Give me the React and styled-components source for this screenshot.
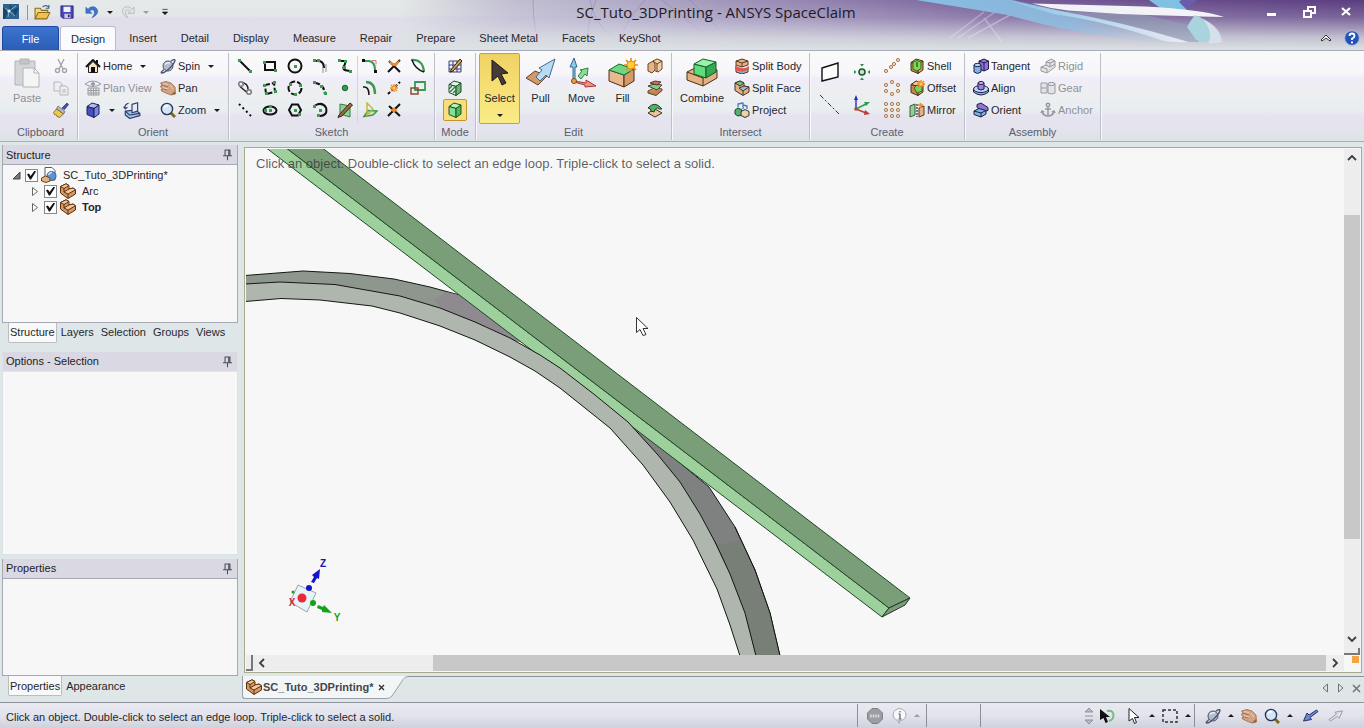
import { useState } from "react";
import styled, { createGlobalStyle, css } from "styled-components";

const GlobalStyle = createGlobalStyle`
  * {
    box-sizing: border-box;
  }
  body {
    margin: 0;
    background: #e0e6ea;
    color: #26262c;
    font-family: "Liberation Sans", Arial, sans-serif;
    font-size: 11px;
    line-height: 16px;
  }
  button {
    margin: 0;
    padding: 0;
    border: 0;
    background: none;
    color: inherit;
    font: inherit;
  }
  svg {
    display: block;
    flex: none;
  }
`;

const ink = "#1b1b1b";
const tan = "#e3b184";
const green = "#3a9a52";

const Window = styled.div`
  display: flex;
  flex-direction: column;
  min-height: 100vh;
`;

/* ---------- title bar ---------- */

const Header = styled.header`
  position: relative;
  overflow: hidden;
  border-bottom: 1px solid #a9abba;
  background: linear-gradient(#e6e8e8 0, #e4e8e9 15px, #e0dfe9 18px, #e1deea 100%);
`;

const HeaderArt = styled.svg`
  position: absolute;
  top: 0;
  right: 0;
`;

const TitleBar = styled.div`
  position: relative;
  display: grid;
  grid-template-columns: 1fr auto 1fr;
  align-items: center;
  height: 24px;
`;

const Title = styled.h1`
  margin: 0;
  padding-left: 68px;
  font: 400 15px/20px "Open Sans", "Noto Sans", sans-serif;
  color: #1d1a26;
`;

const QuickAccess = styled.div`
  display: flex;
  align-items: center;
  padding-left: 3px;
`;

const QuickSep = styled.span`
  width: 1px;
  height: 15px;
  margin: 0 6px 0 8px;
  background: #8d93a0;
`;

const QuickButton = styled.button`
  display: grid;
  place-items: center;
  width: ${({ $w }) => $w || 25}px;
  height: 20px;
`;

const WindowButtons = styled.div`
  display: flex;
  justify-content: flex-end;
  button {
    display: grid;
    place-items: center;
    width: 37px;
    height: 20px;
  }
`;

const Caret = styled.span`
  width: 0;
  height: 0;
  border: 3px solid transparent;
  border-${({ $up }) => ($up ? "top" : "bottom")}-width: 0;
  border-${({ $up }) => ($up ? "bottom" : "top")}-color: ${({ $dim }) =>
    $dim ? "#9a9ca4" : ink};
`;

const TabRow = styled.nav`
  position: relative;
  display: flex;
  align-items: flex-end;
  height: 26px;
  padding-left: 2px;
`;

const RibbonTab = styled.button`
  height: 24px;
  margin-right: 2px;
  padding: 0 11px;
  ${({ $kind }) =>
    $kind === "file" &&
    css`
      width: 57px;
      margin-right: 1px;
      border: 1px solid #1d4aa4;
      border-bottom: 0;
      border-radius: 3px 3px 0 0;
      background: linear-gradient(#3d74cd, #2a5db8);
      color: #fff;
    `}
  ${({ $kind }) =>
    $kind === "active" &&
    css`
      padding: 0 10px;
      border: 1px solid #b9bccb;
      border-bottom: 0;
      border-radius: 3px 3px 0 0;
      background: #fbfbfd;
    `}
`;

const TabRowEnd = styled.div`
  display: flex;
  align-items: center;
  gap: 12px;
  height: 24px;
  margin-left: auto;
  padding-right: 4px;
`;

/* ---------- ribbon ---------- */

const Ribbon = styled.div`
  display: flex;
  height: 91px;
  padding: 2px 0 0 4px;
  border-bottom: 1px solid #a9aebd;
  background: linear-gradient(
    #fafafa 0,
    #f7f7fa 22px,
    #efedf9 28px,
    #eeeef0 40px,
    #e9eef0 58px,
    #e5e3ef 66px,
    #e4e3ee 78px,
    #dce4e6 100%
  );
`;

const Group = styled.section`
  display: flex;
  flex-direction: column;
  margin-bottom: 1px;
  border-right: 1px solid #bdc0cb;
  box-shadow: 1px 0 #f8f8fb;
`;

const GroupBody = styled.div`
  display: flex;
  height: 71px;
  padding: ${({ $pad }) => $pad || "0 4px"};
`;

const GroupName = styled.h2`
  margin: 0;
  font-size: 11px;
  font-weight: 400;
  text-align: center;
  color: #5b5e6c;
`;

const BigButton = styled.button`
  display: flex;
  flex-direction: column;
  align-items: center;
  width: ${({ $w }) => $w || 41}px;
  padding-top: 3px;
  border: 1px solid transparent;
  border-radius: 2px;
  color: ${({ disabled }) => (disabled ? "#8f9098" : "inherit")};
  ${({ $on }) =>
    $on &&
    css`
      border-color: #c4a23c;
      background: linear-gradient(#f0d264, #f6de74 45%, #f9ec86);
    `}
  svg {
    margin-bottom: 1px;
  }
  ${Caret} {
    margin-top: 8px;
  }
`;

const IconGrid = styled.div`
  display: grid;
  grid-template-columns: repeat(${({ $cols }) => $cols || 1}, ${({ $w }) => $w || 24}px);
  grid-auto-rows: ${({ $h }) => $h || 22}px;
  padding-top: 2px;
`;

const GridDivider = styled.span`
  width: 1px;
  height: 66px;
  margin-top: 3px;
  background: #d3d5dd;
`;

const IconButton = styled.button`
  display: grid;
  place-items: center;
  border: 1px solid transparent;
  border-radius: 2px;
  ${({ $on }) =>
    $on &&
    css`
      border-color: #c4962c;
      background: #f8df7c;
    `}
`;

const LabelColumn = styled.div`
  display: flex;
  flex-direction: column;
  width: ${({ $w }) => $w}px;
  padding-top: 2px;
`;

const LabelRow = styled.div`
  display: flex;
  align-items: center;
  gap: 7px;
  height: 22px;
`;

const LabelButton = styled.button`
  display: flex;
  align-items: center;
  gap: 2px;
  height: 22px;
  white-space: nowrap;
  color: ${({ disabled }) => (disabled ? "#8f9098" : "inherit")};
  ${Caret} {
    margin-left: 6px;
  }
`;

/* ---------- work area ---------- */

const Work = styled.div`
  display: flex;
  flex: 1;
  background: #dfe6e8;
`;

const Sidebar = styled.aside`
  display: flex;
  flex-direction: column;
  width: 240px;
  padding: 3px 2px 0;
`;

const Panel = styled.section`
  display: flex;
  flex-direction: column;
  flex: ${({ $grow }) => $grow} 1 0;
  margin-bottom: ${({ $plain }) => ($plain ? 4 : 0)}px;
  border: 1px solid ${({ $plain }) => ($plain ? "#dde2e8" : "#a4a9b3")};
  border-top: 0;
  background: #f7f7f7;
`;

const PanelHead = styled.header`
  display: flex;
  align-items: center;
  justify-content: space-between;
  height: 20px;
  padding: 0 3px;
  border-bottom: 1px solid ${({ $plain }) => ($plain ? "#e4e4ec" : "#a4a9b3")};
  background: #d9d8e3;
  h2 {
    margin: 0;
    font-size: 11px;
    font-weight: 400;
    color: #1c1c22;
  }
`;

const PanelTabs = styled.div`
  display: flex;
  height: ${({ $h }) => $h}px;
  padding-left: 6px;
`;

const PanelTab = styled.button`
  height: 20px;
  padding: 0 1px;
  border: 1px solid ${({ $on }) => ($on ? "#b9bdc4" : "transparent")};
  border-top: 0;
  border-radius: 0 0 2px 2px;
  background: ${({ $on }) => ($on ? "#f9f9f9" : "none")};
  & + & {
    padding: 0 2px 0 3px;
  }
`;

const Tree = styled.ul`
  margin: 0;
  padding: 2px 0 0 8px;
  list-style: none;
`;

const TreeRow = styled.li`
  display: flex;
  align-items: center;
  height: 16px;
  padding-left: ${({ $level }) => $level * 19}px;
  font-weight: ${({ $bold }) => ($bold ? 700 : 400)};
  label {
    display: flex;
    align-items: center;
    gap: 6px;
    margin-left: 3px;
  }
`;

const Twisty = styled.button`
  display: grid;
  place-items: center;
  width: 10px;
  height: 14px;
  margin-right: 4px;
`;

const Check = styled.input`
  appearance: none;
  display: grid;
  place-items: center;
  width: 13px;
  height: 13px;
  margin: 0;
  border: 1px solid #85888e;
  background: #fff;
  &:checked::before {
    content: "";
    width: 9px;
    height: 9px;
    background: #111;
    clip-path: polygon(0 42%, 22% 32%, 40% 60%, 85% 0, 100% 10%, 45% 100%, 32% 100%);
  }
`;

const Main = styled.main`
  display: flex;
  flex: 1;
  flex-direction: column;
  min-width: 0;
`;

const Frame = styled.div`
  display: grid;
  flex: 1;
  grid-template-columns: 1fr 16px;
  grid-template-rows: 1fr 16px;
  margin: 5px 2px 3px 4px;
  padding: 1px;
  border: 1px solid #a9a98c;
  background: #f7f7f7;
`;

const Viewport = styled.div`
  position: relative;
  min-height: 380px;
  overflow: hidden;
`;

const Scene = styled.svg`
  position: absolute;
  inset: 0;
  width: 100%;
  height: 100%;
`;

const Hint = styled.p`
  position: absolute;
  top: 7px;
  left: 10px;
  margin: 0;
  font-size: 13px;
  color: rgba(50, 50, 56, 0.78);
`;

const ScrollBar = styled.div`
  display: flex;
  flex-direction: ${({ $vertical }) => ($vertical ? "column" : "row")};
  background: #ededed;
`;

const ScrollButton = styled.button`
  display: grid;
  place-items: center;
  flex: none;
  width: 18px;
  height: 16px;
  ${({ $vertical }) => $vertical && "width: 16px; height: 18px;"}
`;

const Track = styled.div`
  flex: ${({ $grow }) => $grow} 1 0;
  background: ${({ $thumb }) => ($thumb ? "#c8c8c8" : "none")};
`;

const SplitBox = styled.span`
  flex: none;
  width: ${({ $vertical }) => ($vertical ? 16 : 7)}px;
  height: ${({ $vertical }) => ($vertical ? 7 : 16)}px;
  border-right: 2px solid #77777c;
  border-bottom: 2px solid #77777c;
`;

const Corner = styled.div`
  display: flex;
  justify-content: flex-end;
  padding: 1px;
  span {
    width: 7px;
    height: 7px;
    background: #f2a541;
  }
`;

const DocStrip = styled.div`
  display: flex;
  align-items: flex-start;
  height: 26px;
  margin-left: 2px;
`;

const DocTab = styled.div`
  display: flex;
  align-items: center;
  gap: 1px;
  height: 23px;
  padding-left: 3px;
  border: 1px solid #9aa0a8;
  border-width: 0 0 1px 1px;
  border-radius: 0 0 0 3px;
  background: #f3f6f7;
  font-size: 11px;
  font-weight: 700;
  color: #45464c;
  button {
    margin-left: 3px;
  }
`;

const DocRest = styled.div`
  display: flex;
  flex: 1;
  align-items: center;
  justify-content: flex-end;
  gap: 8px;
  height: 23px;
  padding-right: 3px;
  border-top: 1px solid #8b9298;
`;

/* ---------- status bar ---------- */

const StatusBar = styled.footer`
  display: flex;
  align-items: center;
  height: 26px;
  padding-left: 6px;
  border-top: 1px solid #8e929c;
  background: linear-gradient(#e9e9f1, #e2e3ec 50%, #cfd1dc);
`;

const StatusText = styled.output`
  flex: 1;
  padding-top: 2px;
`;

const StatusSection = styled.div`
  display: flex;
  align-items: center;
  height: 23px;
  width: ${({ $w }) => ($w ? `${$w}px` : "auto")};
  padding-left: ${({ $pad }) => $pad || 0}px;
  border-left: 1px solid ${({ $clear }) => ($clear ? "transparent" : "#8c909a")};
`;

const StatusButton = styled.button`
  display: grid;
  place-items: center;
  width: ${({ $w }) => $w || 20}px;
  height: 22px;
`;

/* ---------- icons ---------- */

const line = { fill: "none", stroke: "#111", strokeWidth: 1.5 };

const Dots = ({ at, color = green, size = 3 }) =>
  at.map(([x, y]) => (
    <rect key={`${x}-${y}`} x={x - 1} y={y - 1} width={size} height={size} fill={color} />
  ));

const Rings = ({ at }) =>
  at.map(([x, y]) => (
    <circle key={`${x}-${y}`} cx={x} cy={y} r="1.6" fill="#f3d9bd" stroke="#a97c55" />
  ));

const Box = ({ top, left, right, stroke = ink }) => (
  <g stroke={stroke} strokeLinejoin="round">
    <path d="M2 4.500 7 1l7 2-5 3.500z" fill={top} />
    <path d="M2 4.500l7 2v9l-7-3z" fill={left} />
    <path d="M9 6.500l5-3.500v9l-5 3.500z" fill={right} />
  </g>
);

const Sparks = ({ x = 8, y = 5 }) => (
  <g>
    <path
      d={`M${x - 4} ${y}h8M${x} ${y - 4}v8M${x - 3} ${y - 3}l6 6M${x + 3} ${y - 3}l-6 6`}
      stroke="#f08a2c"
      strokeWidth="1.4"
    />
    <circle cx={x} cy={y} r="1.6" fill="#ffd23c" />
  </g>
);

const Hand = () => (
  <g strokeLinejoin="round">
    <path
      d="M.500 3L6 1.500l5 1.500 4 4 .500 7L11 15l-4-1.500L1.500 11 1 9.500 3 9 .500 7 1 5.500 2.500 5.500z"
      fill="#d3a382"
      stroke="#94694b"
      strokeWidth=".8"
    />
    <path d="M3 5.500l5 1.500M3.500 9l4 1" fill="none" stroke="#94694b" strokeWidth=".8" />
    <path d="M3 3.500l5 1M3 7.500l5 1.500M10 5l3 4" fill="none" stroke="#efd0b4" />
    <path d="M11 14.500l4-3.500v3z" fill="#8f6044" />
  </g>
);

const Magnifier = () => (
  <g>
    <path d="M11 11l4 4" stroke="#7d6a1c" strokeWidth="3" />
    <circle cx="7" cy="7" r="5.6" fill="#d5e4f5" stroke="#26365e" strokeWidth="1.4" />
    <path d="M4 6q1-3 4-2" fill="none" stroke="#fff" strokeWidth="1.4" />
  </g>
);

const Planet = () => (
  <g fill="none" stroke="#4a546e">
    <circle cx="8" cy="8" r="5" fill="#b4bccd" />
    <path d="M5 6.500Q7 4 10 5" stroke="#eef1f6" strokeWidth="1.500" />
    <path d="M4 11.500C1 14 .500 15 2 15c3 0 12-8 13-12.500.300-1.500-2-1-4 .800" strokeWidth="1.300" />
  </g>
);

const StepBlock = () => (
  <g stroke="#5d3213" strokeLinejoin="round">
    <path d="M.500 3.500L6 .800 9 2.500V6l4-1 2.500 1.800V11L8 15.500.500 10z" fill="#d9955e" />
    <path d="M.500 3.500L6 .800 9 2.500 4 5.500zM4 9L9 6l4-1 2.500 1.800L8 11z" fill="#f3caa2" />
    <path d="M4 5.500V9M8 11v4.500" fill="none" />
  </g>
);

const icons = {
  logo: (
    <g>
      <rect width="16" height="15" fill="#2b6492" />
      <path d="M0 3l5 4-3 8H0zM7 0l3 6-4 4M16 3l-6 3 2 7" fill="#1c4669" />
      <path d="M2 4l4 3-1 6M6 7l7-5M6 7l6 5" fill="none" stroke="#7fb4d4" />
      <circle cx="6" cy="7" r="1.600" fill="#e6f4fa" />
    </g>
  ),
  open: (
    <g stroke="#8a6a1c" strokeLinejoin="round">
      <path d="M1 14V4h5l1 2h6v3" fill="#f5d778" />
      <path d="M1 14l3-6h11l-3 6z" fill="#f0c14a" />
      <path d="M8 3q3-3 6 0M14 1v3h-3" fill="none" stroke="#3b5b8c" />
    </g>
  ),
  save: (
    <g>
      <path d="M1 1h14v14H3l-2-2z" fill="#4a45b5" stroke="#2b2780" />
      <path d="M4 2h8v6H4z" fill="#eef0fb" />
      <path d="M5 10h7v5H5z" fill="#c9cbe6" />
      <path d="M9 11h2v3H9z" fill="#2b2780" />
    </g>
  ),
  undo: (
    <path
      d="M1 2.500v7h7L5.500 7Q8 4.500 10 6q2.500 3-2 8.500Q15 11 14.500 6.500 13 1.500 8 2 5 2.500 3.500 4.800z"
      fill="#3f74cc"
      stroke="#2a55a0"
      strokeWidth=".6"
    />
  ),
  redo: (
    <path
      d="M15 2.500v7H8L10.500 7Q8 4.500 6 6q-2.500 3 2 8.500Q1 11 1.500 6.500 3 1.500 8 2q3 .500 4.500 2.800z"
      fill="#e1e3e7"
      stroke="#aaadb4"
      strokeWidth=".8"
    />
  ),
  cut: (
    <g fill="none" stroke="#a3a5ab" strokeWidth="1.400">
      <path d="M5 1l5 10M11 1L6 11" />
      <circle cx="4.500" cy="12.500" r="2" />
      <circle cx="11.500" cy="12.500" r="2" />
    </g>
  ),
  copy: (
    <g fill="#eeeef0" stroke="#b4b6bc">
      <path d="M1 2h6l2 2v7H1z" />
      <path d="M7 6h6l2 2v7H7z" />
      <path d="M9 10h4M9 12h4" />
    </g>
  ),
  brush: (
    <g stroke="#6e5a24" strokeWidth=".8">
      <path d="M9 6l5-5 1.500 1.500-4 5z" fill="#4b4fa8" stroke="#34386f" />
      <path d="M5 4l7 5.500-1.500 2.500L3.500 7z" fill="#b5b7c4" stroke="#666a78" />
      <path d="M3.500 7l7 5-4 3.500-2.500-1-.500-1.500-2-.500-1-2z" fill="#edc84c" />
    </g>
  ),
  home: (
    <g strokeLinejoin="round">
      <path d="M1 9l7-7 7 7" fill="none" stroke="#111" strokeWidth="2" />
      <path d="M3.500 8L8 3.500 12.500 8v6.500h-9z" fill="#f4e6c3" stroke="#222" />
      <path d="M6 9h4v5.500H6z" fill="#111" />
      <path d="M12 2v3" stroke="#111" strokeWidth="2" />
    </g>
  ),
  planView: (
    <g fill="none" stroke="#989aa1">
      <path d="M0 4q8-6 16 0-8 5-16 0z" />
      <circle cx="8" cy="4" r="1.500" fill="#989aa1" />
      <path d="M3 8h11v7H3zM3 10.500h11M3 13h11M6 8v7M8.500 8v7M11 8v7" />
    </g>
  ),
  cubeBlue: <Box top="#b3bbf2" left="#4451bd" right="#7d88dd" stroke="#1a1f5e" />,
  viewPlane: (
    <g stroke="#2e3a6b" strokeLinejoin="round">
      <path d="M2 9l9-1 4 3v2l-9 2.500-4-3z" fill="#9fc3ea" />
      <path d="M2 9l4 3.500 9-1.500" fill="none" />
      <path d="M8 3l5-1.500v7.500l-5 1.500z" fill="#e3ecf9" />
      <path d="M5 2Q1 3 2 6.500M.500 5l1.500 2L4 5.500" fill="none" />
    </g>
  ),
  spin: <Planet />,
  pan: <Hand />,
  zoom: <Magnifier />,
  line: <g><path d="M3 3l10 10" {...line} strokeWidth="2" /><Dots at={[[2, 2], [13, 13]]} /></g>,
  rect: <g><path d="M3 4h10v8H3z" {...line} strokeWidth="2" /><Dots at={[[2, 4], [13, 12]]} /></g>,
  circle: <g><circle cx="8" cy="8" r="6.500" {...line} strokeWidth="2" /><Dots at={[[8, 8]]} /></g>,
  tangentArc: <g><path d="M4 3q8-1 8 7" {...line} strokeWidth="2.200" /><path d="M14 6v8M11 9v6" stroke="#8b8d92" /><Dots at={[[2, 2], [6, 2]]} /></g>,
  spline: <g><path d="M3 3h5v3q-4 6 2 6.500l3 .500" {...line} strokeWidth="2" /><Dots at={[[2, 2], [8, 3], [7, 9], [13, 13]]} /></g>,
  polyTangent: <g fill="none" stroke="#777a80" strokeWidth="1.500"><path d="M5 2.500q6 1 6 7M3 6.500l7 6" stroke="#222" /><circle cx="4" cy="4" r="2.300" /><circle cx="12" cy="12" r="2.300" /></g>,
  rect3: <g><path d="M3 5l9-2 1 9-9 2z" {...line} strokeDasharray="5 2" strokeWidth="2" /><Dots at={[[2, 5], [12, 2], [4, 13], [13, 11]]} /></g>,
  circle3: <g><circle cx="8" cy="8" r="6.500" {...line} strokeDasharray="6 2" strokeWidth="2" /><Dots at={[[3, 4], [13, 5], [8, 14]]} /></g>,
  arc3: <g><path d="M3 3q9 1 10 11" {...line} strokeDasharray="5 2" strokeWidth="2.200" /><Dots at={[[2, 2], [9, 6], [13, 13]]} /></g>,
  point: <circle cx="8" cy="8" r="2.800" fill="#2f9a50" stroke="#1f6c36" />,
  construction: <path d="M2 2l12 12" {...line} strokeDasharray="2 3" strokeWidth="2" />,
  ellipse: <g><ellipse cx="8" cy="8.500" rx="6.500" ry="4" {...line} strokeWidth="2" /><Dots at={[[8, 4], [8, 8], [3, 8]]} /></g>,
  polygon: <g><path d="M5 2.500h6l3 5.500-3 5.500H5L2 8z" {...line} strokeWidth="2" /><Dots at={[[8, 8], [12, 12]]} /></g>,
  sweepArc: <g><path d="M3 3.500q7-4 11 2 2 8-6 8.500" {...line} strokeWidth="2" /><Dots at={[[2, 4], [8, 8], [6, 13]]} /></g>,
  projectSketch: (
    <g>
      <path d="M3 2l10 2v11L3 12z" fill="#8ed09a" stroke="#2f7d43" />
      <path d="M2 13L13 1l2.500 2L5 14l-4 1.500z" fill="#9b6b3c" stroke="#3b2513" />
    </g>
  ),
  corner: <g fill="none"><path d="M2 3h5q6 1 6 9" stroke={green} strokeWidth="2.200" /><path d="M10 2.500h4v4" stroke="#e07070" /><Dots at={[[1, 2], [13, 13]]} color="#111" /></g>,
  trim: <g><path d="M2 14L14 2M3 3l11 11" {...line} strokeWidth="2" /><path d="M3 2l4 3 2 0 5-3-2 4-2 2-3 0-3-2z" fill="#f08a2c" /></g>,
  bend: <g fill="none"><path d="M1 2q12-1 13 12" stroke={green} strokeWidth="2.200" /><path d="M2 2q3 9 12 12" stroke="#111" strokeWidth="1.400" /></g>,
  offsetCurve: <g fill="none"><path d="M4 2q9 0 9 12" stroke={green} strokeWidth="2.400" /><path d="M1 7q6-1 6 8" stroke="#111" strokeWidth="1.500" /></g>,
  split: <g><path d="M2 14L14 2" {...line} strokeDasharray="3 2" strokeWidth="2" /><Sparks x={8} y={8} /></g>,
  scale: <g fill="none"><path d="M5 2h10v8H5z" stroke={green} strokeWidth="1.800" /><path d="M1 8h7v6H1z" stroke="#8c4a3a" strokeWidth="1.500" /></g>,
  projectTo: <g fill="none"><path d="M2 14.500l4-6 9 .500-4 4z" fill="#c8e8b8" stroke={green} strokeWidth="1.500" /><path d="M5 1l6 6-6 6z" stroke="#c4b43c" strokeWidth="1.400" /></g>,
  splitCurve: <g><path d="M2 14L14 2M3 4l11 10" {...line} strokeWidth="2" /><path d="M6 7l2-2 2 2 2 1-2 1-2 2-2-2-2-1z" fill="#f08a2c" /></g>,
  modeSketch: <g><path d="M2 3h12v11H2zM2 7h12M2 11h12M6 3v11M10 3v11" fill="#eef" stroke="#39426e" /><path d="M4 12L13 1l2 2-9 10-3 1z" fill="#d9a352" stroke="#3b2513" /></g>,
  modeSection: <g><Box top="#dff3e1" left="#fff" right="#66b878" stroke="#1d4a29" /><path d="M2 9l3-3M3 12l5-5M6 13l3-3" stroke="#2f7d43" strokeWidth="1.500" /></g>,
  modeSolid: <Box top="#b2f0bd" left="#86e094" right="#4cb862" stroke="#185426" />,
  editShell: <g fill="#f2cfa9" stroke="#6b4220" strokeLinejoin="round"><path d="M6 3l4-2 5 2v8l-4 3-5-2z" /><path d="M1 6l5-3 2 3v6l-3 3-4-2z" fill="#e5b588" /><path d="M10 6l5-3M10 6v8M6 3l4 3" fill="none" /></g>,
  editLayer: <g stroke="#4a4030" strokeLinejoin="round"><path d="M1 11l6-3 8 1-6 5z" fill="#e3a06c" /><path d="M1 11v2l8 2.500 6-5V9" fill="#c9824f" /><path d="M1 6l6-2 8 1-5 5z" fill="#7ed08e" /><path d="M3 3l5-2 6 1-4 3z" fill="#d66a5c" /></g>,
  editMirror: <g stroke="#3a3226" strokeLinejoin="round"><path d="M1 11l7-4 7 4-7 4z" fill="#ecc39b" /><path d="M1 6q7-8 14 1l-3 0q-3-3-5 3L4 9q0-3-3-3z" fill="#4cb862" /></g>,
  splitBody: <g stroke="#5c3a22" strokeLinejoin="round"><path d="M2 10l6 3 6-2v3l-6 2-6-2z" fill="#88aee0" /><path d="M1 7q7 6 14 1v3q-7 4-14 1z" fill="#e2584e" stroke="none" /><path d="M2 3l6-2 6 2v4l-6 2-6-2z" fill={tan} /><path d="M2 3l6 2 6-2M8 5v4" fill="none" /></g>,
  splitFace: <g stroke="#4a3322" strokeLinejoin="round"><path d="M1 3l5-2 4 2v3l5 1v5l-6 3.500-8-5z" fill={tan} /><path d="M1 3l5-2 4 2-4 3z" fill="#6cc77e" /><path d="M5 8l5-2 5 1-6 4z" fill="#8cc2ee" /><path d="M9 11v4" fill="none" /></g>,
  project: <g stroke="#1d3c2a" strokeLinejoin="round"><path d="M1 8l3-2 4 2v5l-4 1-3-2z" fill="#52b46c" /><path d="M7 9.500l4-2 4 2v4l-4 2-4-2z" fill="#f2cfa9" /><path d="M4 5V2l5-1v6M9 3l4 1v3" fill="none" stroke="#4a78b8" strokeWidth="1.300" /></g>,
  shell: <g><Box top="#f2c694" left="#c8884c" right="#d99e6a" stroke="#4a2f14" /><path d="M4 4l4-1.500L12 4v6.500L8 13l-4-2z" fill="#7ed957" stroke="#2e6b1a" /><path d="M8 4v5" stroke="#2e6b1a" strokeWidth="1.500" /></g>,
  offset: <g><Box top="#f2c694" left="#c8884c" right="#d99e6a" stroke="#4a2f14" /><path d="M5 8l3-3 5 1v5l-5 2z" fill="#78d06a" stroke="#2e6b1a" /><Sparks x={12} y={4} /></g>,
  mirror: <g stroke="#3d5a2a"><path d="M1 4l5-2v11l-5 2z" fill="#8ed09a" /><path d="M8 2v13" stroke="#555" strokeDasharray="2 1" strokeWidth="1.500" /><path d="M10 6l5-2v9l-5 2z" fill={tan} stroke="#5c3a22" /><path d="M9 3h5M11.500 1v5" stroke="#f08a2c" strokeWidth="1.600" fill="none" /></g>,
  dotsDiag: <Rings at={[[2, 13], [7, 9], [14, 2], [10, 6]]} />,
  dotsRing: <Rings at={[[8, 2], [2, 5], [14, 5], [2, 11], [14, 11], [8, 14]]} />,
  dotsGrid: <Rings at={[[2, 2], [8, 2], [14, 2], [2, 8], [8, 8], [14, 8], [2, 14], [8, 14], [14, 14]]} />,
  tangent: <g stroke="#1e1d45" strokeLinejoin="round"><path d="M6 3l5-2 4.500 2v8l-4.500 2-5-2z" fill="#9271d8" /><path d="M6 3l5 2 4.500-2M11 5v8" fill="none" /><path d="M1 7v7q3.500 3 7 0V7z" fill="#7db4e6" /><ellipse cx="4.500" cy="7" rx="3.500" ry="1.600" fill="#b8dcf5" /></g>,
  align: <g stroke="#1e1d45"><path d="M.500 9v3q7.500 6 15 0V9z" fill="#7db4e6" /><ellipse cx="8" cy="9" rx="7.500" ry="3.500" fill="#b8dcf5" /><path d="M5 3v6q3 2 6 0V3z" fill="#a77be0" /><ellipse cx="8" cy="3" rx="3" ry="1.500" fill="#d2b6f5" /></g>,
  orient: <g stroke="#1e1d45" strokeLinejoin="round"><path d="M4 2.500l4-1.500 7 4.500v3l-4 1-7-4z" fill="#9271d8" /><path d="M1 9l5-2.500 7 2v3.500L8 15l-7-2.500z" fill="#7db4e6" /><path d="M1 9l7 2 5-2.500M8 11v4" fill="none" /></g>,
  rigid: <g fill="#e4e4e8" stroke="#97999f" strokeLinejoin="round"><path d="M1 9l5-2V4l5-3 4 2v6l-8 6-6-2z" /><path d="M6 7l4 2 5-3M6 4l4 1 5-2M7 14v-3L1 9M10 5v4" fill="none" /></g>,
  gear: <g fill="#e4e4e8" stroke="#97999f"><path d="M1 3h6v10H1M1 8h5M1 3v10" /><path d="M8 4v9q3 2 7 0V4z" /><ellipse cx="11.500" cy="4" rx="3.500" ry="1.600" /></g>,
  anchor: <g fill="none" stroke="#97999f" strokeWidth="1.500"><circle cx="8" cy="3" r="1.700" /><path d="M8 5v9M5 7h6M2 9q1 5 6 5 5 0 6-5M1 11l1-2 2 1M15 11l-1-2-2 1" /></g>,
  document: <g><path d="M4 .500h7l3 3V13H4z" fill="#fff" stroke="#555a66" /><circle cx="10.500" cy="9" r="4.500" fill="#5d93d0" stroke="#365f94" /><path d="M7.500 8q1-2.500 3.500-2.500" fill="none" stroke="#cfe2f5" strokeWidth="1.500" /><path d="M.500 11l4-2L9 11v3l-4 1.500L.500 14z" fill={tan} stroke="#6b4220" /></g>,
  part: <StepBlock />,
  pin: <g fill="none" stroke="#4a4c58" strokeWidth="1.300"><path d="M5 2.500v7M11 2.500v7M9.500 2.500v7M4.500 2.500h7M2.500 9.500h11M8 10v5" /></g>,
  help: <g><circle cx="8" cy="8" r="7.300" fill="#2253b4" stroke="#9fb7e2" /><path d="M5.500 6q0-2.500 2.500-2.500T10.500 6Q10.500 7.500 8 8.500V10" fill="none" stroke="#fff" strokeWidth="1.800" /><path d="M7 11.500h2v1.800H7z" fill="#fff" /></g>,
  stop: <g><path d="M5 .500h6L15.500 5v6L11 15.500H5L.500 11V5z" fill="#9b9da3" stroke="#7f8187" /><path d="M4 6.500v3M6.500 6.500v3M9 6.500v3M11.500 6.500v3" stroke="#dcdde0" strokeWidth="1.500" /></g>,
  info: <g><path d="M8 .700a6.500 6 0 1 1-1 12L7.500 15.500 6 12.500A6.500 6 0 0 1 8 .700z" fill="#f8f9fa" stroke="#a5a8b0" /><path d="M8 6v5M8 3v1.500M6.500 6H8M6.500 11h3" stroke="#7d8088" strokeWidth="1.600" /></g>,
  loopCursor: <g><path d="M8 3q7-1 6.500 5-.500 4-4.500 5" fill="none" stroke="#6cc07a" strokeWidth="2" /><path d="M1 1l10 8-4 0 2 5-2.500 1-2-5L1 12z" fill="#111" /></g>,
  cursor: <path d="M3 .500l10 9H8.500l2 5-2 1-2-5L3 13z" fill="#fff" stroke="#222" />,
  marquee: <path d="M1 2h14v12H1z" fill="none" stroke="#333" strokeDasharray="3 2" strokeWidth="1.500" />,
  arrowDownLeft: <path d="M15 3.500L13.500 2 6 7 4 5 .500 13l8-1.500-1.500-2z" fill="#7384c8" stroke="#26346e" strokeLinejoin="round" />,
  arrowUpRight: <path d="M1 12.500L2.500 14 10 9l2 2 3.500-8-8 1.500 1.500 2z" fill="#e0e1e6" stroke="#9699a2" strokeLinejoin="round" />,
  dropBar: <path d="M5 5h6M5 8h6l-3 3z" fill={ink} stroke={ink} strokeWidth=".8" />,
};

const Icon = ({ name, size = 16 }) => (
  <svg width={size} height={size} viewBox="0 0 16 16" aria-hidden="true">
    {icons[name]}
  </svg>
);

const bigIcons = {
  paste: (
    <g stroke="#b2b4b9">
      <path d="M4 4h20v24H4z" fill="#d4d5d8" />
      <path d="M9 2h9v5H9z" fill="#c2c4c8" />
      <path d="M12 11h11l5 5v14H12z" fill="#f5f5f6" />
      <path d="M23 11v5h5" fill="none" />
    </g>
  ),
  select: <path d="M8 3l16 13-7 1 5 9-4 2-4-9-6 5z" fill="#453a38" stroke="#1e1818" />,
  pull: (
    <g strokeLinejoin="round">
      <path d="M1 21l9-7 12 5-9 9z" fill="#d09a6c" stroke="#6b4220" />
      <path d="M30 2L14 11l3 2-6 7 4 4 6-6 3 3z" fill="#b9dcf5" stroke="#3f6b99" />
    </g>
  ),
  move: (
    <g strokeLinejoin="round">
      <path d="M7 22V10H4l4-9 3 9H9v12z" fill="#8cc8ec" stroke="#35688f" />
      <path d="M12 19l4-5-2-1 8-2-1 8-2-2-4 5z" fill="#8edb96" stroke="#2b8443" />
      <path d="M8 24l12 2v-3l10 6-11 1v-2L8 25z" fill="#ee9088" stroke="#a43a32" />
      <circle cx="8" cy="24" r="2.500" fill="#e8a24c" stroke="#8a4a14" />
    </g>
  ),
  fill: (
    <g strokeLinejoin="round">
      <path d="M2 13l15 5v12L2 24z" fill="#e9b88e" stroke="#4a2f14" />
      <path d="M17 18l10-6v12l-10 6z" fill="#d69a68" stroke="#4a2f14" />
      <path d="M2 13l10-6 15 5-10 6z" fill="#6fd681" stroke="#1d6630" />
      <path d="M17 8h14M24 1v14M19 3l10 10M29 3L19 13" stroke="#e88a14" strokeWidth="1.600" />
      <circle cx="24" cy="8" r="4" fill="#ffd03a" stroke="#e88a14" />
    </g>
  ),
  combine: (
    <g strokeLinejoin="round">
      <path d="M1 15l8-4 12 4 6-4 4 2v8l-14 8-16-6z" fill={tan} stroke="#4a2f14" />
      <path d="M1 15l16 6 14-8M17 21v8" fill="none" stroke="#4a2f14" />
      <path d="M8 7l12 3v11L8 17z" fill="#5fdc7e" stroke="#155c2a" />
      <path d="M20 10l10-5v10l-10 6z" fill="#34aa55" stroke="#155c2a" />
      <path d="M8 7l9-5 13 3-10 5z" fill="#9af2aa" stroke="#155c2a" />
    </g>
  ),
};

const BigIcon = ({ name }) => (
  <svg width="32" height="32" viewBox="0 0 32 32" aria-hidden="true">
    {bigIcons[name]}
  </svg>
);

const createIcons = {
  Plane: <path d="M3 8l16-5v14L3 21z" fill="#fcfcfd" stroke="#111" strokeWidth="1.400" />,
  Point: (
    <g>
      <circle cx="11" cy="12" r="3" fill="#bde8c4" stroke="#1c5a2c" strokeWidth="1.600" />
      <path d="M9 4h4l-2 2.500zM9 20h4l-2-2.500zM3 10v4l2.500-2zM19 10v4l-2.500-2z" fill="#2f8a48" />
    </g>
  ),
  Axis: <path d="M1 2l19 19" fill="none" stroke="#333" strokeDasharray="5 2 2 2" />,
  Origin: (
    <g fill="none" strokeWidth="1.400">
      <path d="M5 17V4" stroke="#2230c0" />
      <path d="M3 7l2-5 2 5z" fill="#2230c0" />
      <path d="M5 16l10-5" stroke="#2f9a50" />
      <path d="M13 9l6 0-4 4z" fill="#2f9a50" />
      <path d="M5 16l10 4" stroke="#c43a32" />
      <path d="M14 17l5 4-6 1z" fill="#c43a32" />
      <circle cx="5" cy="16" r="1.800" fill="#a05028" />
    </g>
  ),
};

const Chevron = ({ dir }) => {
  const paths = {
    up: "M1 7l4-4 4 4",
    down: "M1 3l4 4 4-4",
    left: "M7 1L3 5l4 4",
    right: "M3 1l4 4-4 4",
  };
  return (
    <svg width="10" height="10" viewBox="0 0 10 10">
      <path d={paths[dir]} fill="none" stroke="#3c3d42" strokeWidth="1.800" />
    </svg>
  );
};

/* ---------- data ---------- */

const tabs = ["Design", "Insert", "Detail", "Display", "Measure", "Repair", "Prepare", "Sheet Metal", "Facets", "KeyShot"];

const sketchTools = [
  "line", "rect", "circle", "tangentArc", "spline",
  "polyTangent", "rect3", "circle3", "arc3", "point",
  "construction", "ellipse", "polygon", "sweepArc", "projectSketch",
];

const sketchEdits = ["corner", "trim", "bend", "offsetCurve", "split", "scale", "projectTo", "splitCurve"];

const ToolButtons = ({ names, active }) =>
  names.map((name) => (
    <IconButton key={name} aria-label={name} $on={name === active}>
      <Icon name={name} />
    </IconButton>
  ));

const Labelled = ({ icon, text, arrow, disabled, label }) => (
  <LabelButton disabled={disabled} aria-label={label}>
    <Icon name={icon} />
    {text}
    {arrow && <Caret />}
  </LabelButton>
);

const RibbonBar = () => (
  <Ribbon>
    <Group>
      <GroupBody $pad="0 5px 0 1px">
        <BigButton $w={44} disabled>
          <BigIcon name="paste" />
          Paste
        </BigButton>
        <IconGrid $w={23}>
          <ToolButtons names={["cut", "copy", "brush"]} />
        </IconGrid>
      </GroupBody>
      <GroupName>Clipboard</GroupName>
    </Group>
    <Group>
      <GroupBody $pad="0 0 0 7px">
        <LabelColumn $w={75}>
          <Labelled icon="home" text="Home" arrow />
          <Labelled icon="planView" text="Plan View" disabled />
          <LabelRow>
            <Labelled icon="cubeBlue" label="Views" arrow />
            <IconButton aria-label="View alignment">
              <Icon name="viewPlane" size={18} />
            </IconButton>
          </LabelRow>
        </LabelColumn>
        <LabelColumn $w={68}>
          <Labelled icon="spin" text="Spin" arrow />
          <Labelled icon="pan" text="Pan" />
          <Labelled icon="zoom" text="Zoom" arrow />
        </LabelColumn>
      </GroupBody>
      <GroupName>Orient</GroupName>
    </Group>
    <Group>
      <GroupBody $pad="0 4px 0 3px">
        <IconGrid $cols={5} $w={25}>
          <ToolButtons names={sketchTools} />
        </IconGrid>
        <GridDivider />
        <IconGrid $cols={3}>
          <ToolButtons names={sketchEdits} />
        </IconGrid>
      </GroupBody>
      <GroupName>Sketch</GroupName>
    </Group>
    <Group>
      <GroupBody $pad="0 8px">
        <IconGrid>
          <ToolButtons names={["modeSketch", "modeSection", "modeSolid"]} active="modeSolid" />
        </IconGrid>
      </GroupBody>
      <GroupName>Mode</GroupName>
    </Group>
    <Group>
      <GroupBody $pad="0 4px 0 3px">
        <BigButton $on>
          <BigIcon name="select" />
          Select
          <Caret />
        </BigButton>
        <BigButton>
          <BigIcon name="pull" />
          Pull
        </BigButton>
        <BigButton>
          <BigIcon name="move" />
          Move
        </BigButton>
        <BigButton>
          <BigIcon name="fill" />
          Fill
        </BigButton>
        <IconGrid>
          <ToolButtons names={["editShell", "editLayer", "editMirror"]} />
        </IconGrid>
      </GroupBody>
      <GroupName>Edit</GroupName>
    </Group>
    <Group>
      <GroupBody $pad="0 0 0 5px">
        <BigButton $w={50}>
          <BigIcon name="combine" />
          Combine
        </BigButton>
        <GroupBody $pad="0 0 0 7px">
          <LabelColumn $w={75}>
            <Labelled icon="splitBody" text="Split Body" />
            <Labelled icon="splitFace" text="Split Face" />
            <Labelled icon="project" text="Project" />
          </LabelColumn>
        </GroupBody>
      </GroupBody>
      <GroupName>Intersect</GroupName>
    </Group>
    <Group>
      <GroupBody $pad="0 0 0 4px">
        <IconGrid $cols={2} $w={32} $h={33}>
          {Object.entries(createIcons).map(([name, drawing]) => (
            <IconButton key={name} aria-label={name}>
              <svg width="22" height="24" viewBox="0 0 22 24">
                {drawing}
              </svg>
            </IconButton>
          ))}
        </IconGrid>
        <IconGrid $w={27}>
          <ToolButtons names={["dotsDiag", "dotsRing", "dotsGrid"]} />
        </IconGrid>
        <GroupBody $pad="0 0 0 4px">
          <LabelColumn $w={55}>
            <Labelled icon="shell" text="Shell" />
            <Labelled icon="offset" text="Offset" />
            <Labelled icon="mirror" text="Mirror" />
          </LabelColumn>
        </GroupBody>
      </GroupBody>
      <GroupName>Create</GroupName>
    </Group>
    <Group>
      <GroupBody $pad="0 0 0 8px">
        <LabelColumn $w={67}>
          <Labelled icon="tangent" text="Tangent" />
          <Labelled icon="align" text="Align" />
          <Labelled icon="orient" text="Orient" />
        </LabelColumn>
        <LabelColumn $w={60}>
          <Labelled icon="rigid" text="Rigid" disabled />
          <Labelled icon="gear" text="Gear" disabled />
          <Labelled icon="anchor" text="Anchor" disabled />
        </LabelColumn>
      </GroupBody>
      <GroupName>Assembly</GroupName>
    </Group>
  </Ribbon>
);

const Banner = () => (
  <HeaderArt width="1364" height="50" viewBox="0 0 1364 50" aria-hidden="true">
    <defs>
      <linearGradient id="purple" x1="0" x2="1" y1="0" y2="0">
        <stop offset="0" stopColor="#6f5a98" stopOpacity="0" />
        <stop offset=".12" stopColor="#7c6ea6" stopOpacity=".35" />
        <stop offset=".35" stopColor="#70599a" stopOpacity=".6" />
        <stop offset=".6" stopColor="#64478c" stopOpacity=".85" />
        <stop offset="1" stopColor="#5a3c80" />
      </linearGradient>
      <linearGradient id="fade" x1="0" x2="0" y1="0" y2="1">
        <stop offset="0" stopColor="#dde3e4" stopOpacity="0" />
        <stop offset=".35" stopColor="#dde0e6" stopOpacity=".25" />
        <stop offset=".75" stopColor="#dde2e4" stopOpacity=".8" />
        <stop offset="1" stopColor="#dce2e3" />
      </linearGradient>
      <linearGradient id="band" x1="0" x2="1" y1="0" y2="0">
        <stop offset="0" stopColor="#86bfe2" />
        <stop offset=".55" stopColor="#8fbfe2" stopOpacity=".85" />
        <stop offset="1" stopColor="#c4cfe4" stopOpacity="0" />
      </linearGradient>
      <linearGradient id="ribbonLight" x1="0" x2="1" y1="0" y2="0">
        <stop offset="0" stopColor="#86c4e6" />
        <stop offset="1" stopColor="#e9ebf3" />
      </linearGradient>
    </defs>
    <path d="M400 0h964v50H400z" fill="url(#purple)" />
    <path
      d="M533 0q0 30 8 50M590 0q5 30 40 50M596 0q-8 20-8 36M645 0q-20 20-24 40M662 0l50 40M690 0l40 40"
      fill="none"
      stroke="#7868a8"
      strokeOpacity=".4"
    />
    <path d="M400 0h964v50H400z" fill="url(#fade)" />
    <path
      d="M950 38l34-26M958 38l37-26M968 38l42-23M984 18l18 24"
      fill="none"
      stroke="#e8e4f2"
      strokeOpacity=".4"
      strokeWidth="1.500"
    />
    <path d="M1060 11l85 4 44 10 10 17q-30 0-60-9z" fill="#8f9fb6" fillOpacity=".6" />
    <path d="M916 0h96l98 22q60 12 74 22-90-4-176-29z" fill="url(#band)" />
    <path d="M1006 0l54 11q62 11 122 29l6 2q-12 1-24-1-60-20-110-27z" fill="url(#ribbonLight)" />
    <path d="M1181 0h16l-10 9-9-7z" fill="#6a5ca8" />
    <path d="M1149 0h32l-2 2 8 8h-24z" fill="#80c0e2" />
    <path d="M1032 3.500l113 3q58 3 79 10.500-48-1-104-3l-52-3.500q-18-2-36-7z" fill="#f2f2f7" />
    <path d="M1195 15q20 8 27 26-13 3-26-1l-9-13q3-6 8-12z" fill="#a9d3dd" />
    <path d="M1203 19q18 8 19 23-6 2-14 1 6-10-5-24z" fill="#dfe4ed" fillOpacity=".8" />
  </HeaderArt>
);

const TopBar = ({ active, onSelect }) => (
  <Header>
    <Banner />
    <TitleBar>
      <QuickAccess>
        <Icon name="logo" />
        <QuickSep />
        <QuickButton $w={17} aria-label="Open"><Icon name="open" size={17} /></QuickButton>
        <QuickButton $w={32} aria-label="Save"><Icon name="save" size={14} /></QuickButton>
        <QuickButton $w={18} aria-label="Undo"><Icon name="undo" size={14} /></QuickButton>
        <QuickButton $w={17} aria-label="Undo list"><Caret /></QuickButton>
        <QuickButton $w={19} aria-label="Redo"><Icon name="redo" size={14} /></QuickButton>
        <QuickButton $w={17} aria-label="Redo list"><Caret $dim /></QuickButton>
        <QuickButton $w={22} aria-label="Customize"><Icon name="dropBar" size={14} /></QuickButton>
      </QuickAccess>
      <Title>SC_Tuto_3DPrinting - ANSYS SpaceClaim</Title>
      <WindowButtons>
        <button aria-label="Minimize">
          <svg width="14" height="14"><path d="M2 8h9v3H2z" fill="#fff" /></svg>
        </button>
        <button aria-label="Restore">
          <svg width="14" height="14" fill="none" stroke="#fff" strokeWidth="2"><path d="M6 5V2h7v6h-3" /><path d="M2 6h7v6H2z" /></svg>
        </button>
        <button aria-label="Close">
          <svg width="14" height="14"><path d="M3 3l8 7M11 3l-8 7" stroke="#fff" strokeWidth="2.200" /></svg>
        </button>
      </WindowButtons>
    </TitleBar>
    <TabRow>
      <RibbonTab $kind="file">File</RibbonTab>
      {tabs.map((tab) => (
        <RibbonTab key={tab} $kind={tab === active ? "active" : "plain"} onClick={() => onSelect(tab)}>
          {tab}
        </RibbonTab>
      ))}
      <TabRowEnd>
        <button aria-label="Collapse ribbon">
          <svg width="12" height="10"><path d="M1 7l5-5 5 5-1 1-4-3-4 3z" fill="#fff" stroke="#333" /></svg>
        </button>
        <button aria-label="Help"><Icon name="help" /></button>
      </TabRowEnd>
    </TabRow>
  </Header>
);

const PanelTitle = ({ text, plain }) => (
  <PanelHead $plain={plain}>
    <h2>{text}</h2>
    <button aria-label={`Pin ${text}`}><Icon name="pin" size={13} /></button>
  </PanelHead>
);

const TreeItem = ({ level, icon, text, bold, open }) => (
  <TreeRow $level={level} $bold={bold}>
    <Twisty aria-label={`Toggle ${text}`}>
      <svg width="9" height="9">
        {open ? (
          <path d="M8 1v7H1z" fill="#77797e" stroke="#444" />
        ) : (
          <path d="M1.500 0.500l5 4-5 4z" fill="#fff" stroke="#666" />
        )}
      </svg>
    </Twisty>
    <Check type="checkbox" id={`node-${text}`} defaultChecked />
    <label htmlFor={`node-${text}`}>
      <Icon name={icon} />
      {text}
    </label>
  </TreeRow>
);

const ModelScene = () => (
  <Scene role="img" aria-label="3D model">
    <g transform="translate(-246 -149)" stroke="#141814" strokeLinejoin="round">
      <path d="M245 275.500L303 271l47 2.500 44 5.500 36 8 33 9 30 24-15 10-18-11-60-21-65-12-55-2-35 2z" fill="#8e978d" />
      <path d="M434 300l12-8 17 4 62 47-10-2-35-17-38-15z" fill="#8f8a90" stroke="none" />
      <path d="M463 296.500l60 45" fill="none" />
      <path d="M610 405l99 82 26 40 20 43 15 43 10 43h-25l-10-43-15-39-15-32-20-32-22-27-30-33z" fill="#7f8180" />
      <path d="M718 545l23-5 14 32 15 41 10 43h-24l-11-43-15-39z" fill="#777f76" stroke="none" />
      <path d="M735 527l20 43 15 43 10 43" fill="none" />
      <path d="M267 148.500l20 0 602 459.500-7 9z" fill="#9dd09d" stroke="#1d4a25" />
      <path d="M287 148.500h36L910 598l-21 10z" fill="#7a9e78" stroke="#1d4a25" />
      <path d="M889 608l21-10-5 7-23 12z" fill="#7f9a7f" stroke="#1d3a22" />
      <path
        d="M245 284l35-2 55 2.500 65 11.500 40 12 35 14 35 16 30 17 20 13 35 27 33 27 30 33 22 27 20 32 15 28 15 32 15 39 11 43h-16l-10-31-13-36-24-49-23-38-27-37-33-37-30-24-20-16-25-17-25-14-35-17-35-14-40-13-28-7-52-6-39-1.500-36 3z"
        fill="#afb6ad"
      />
      <g stroke="none">
        <path d="M298 585l18 8-9 19-17-10z" fill="#e8f3f5" stroke="#98a4ad" />
        <circle cx="309" cy="588" r="3" fill="#1414c8" />
        <circle cx="313" cy="603" r="3" fill="#18a018" />
        <circle cx="293" cy="592" r="1.500" fill="#18a018" />
        <circle cx="302" cy="598" r="4.500" fill="#e8283c" />
        <path d="M311 582l3-5-2-2 8-6-1 10-2-1-3 5z" fill="#1414c8" />
        <path d="M318 605l5 2 1-2 8 8-10-1 0-2-5-2z" fill="#18a018" />
        <g fontSize="10" fontWeight="700" textAnchor="middle">
          <text x="323" y="567" fill="#1414b0">Z</text>
          <text x="337" y="621" fill="#18a018">Y</text>
          <text x="292" y="606" fill="#d8283c">X</text>
        </g>
      </g>
      <path d="M636.500 317.500v15l3.500-3 3 6 3-1-3-6h5z" fill="#fff" stroke="#333" />
    </g>
  </Scene>
);

const Status = ({ text }) => (
  <StatusBar>
    <StatusText>{text}</StatusText>
    <StatusSection $w={69} $pad={6}>
      <StatusButton $w={22} aria-label="Stop"><Icon name="stop" /></StatusButton>
      <StatusButton $w={28} aria-label="Messages"><Icon name="info" /></StatusButton>
      <Caret $up $dim />
    </StatusSection>
    <StatusSection $w={54} />
    <StatusSection $w={99} />
    <StatusSection $clear $pad={2}>
      <StatusButton $w={14} aria-label="Step">
        <svg width="10" height="18" fill="#b9bbc2" stroke="#8f9299">
          <path d="M1 5l4-4 4 4zM1 13l4 4 4-4zM1 9h8" />
        </svg>
      </StatusButton>
      <StatusButton $w={22} aria-label="Revert selection"><Icon name="loopCursor" /></StatusButton>
      <StatusButton $w={31} aria-label="Selection filter"><Icon name="cursor" /></StatusButton>
      <Caret $up />
      <StatusButton $w={30} aria-label="Box select"><Icon name="marquee" /></StatusButton>
      <Caret $up />
    </StatusSection>
    <StatusSection $clear $w={3} />
    <StatusSection $pad={3}>
      <StatusButton $w={30} aria-label="Spin view"><Icon name="spin" /></StatusButton>
      <Caret $up />
      <StatusButton $w={30} aria-label="Pan view"><Icon name="pan" /></StatusButton>
      <StatusButton $w={16} aria-label="Zoom view"><Icon name="zoom" /></StatusButton>
      <StatusButton $w={19} aria-label="Zoom options"><Caret $up /></StatusButton>
      <StatusButton $w={23} aria-label="Previous view"><Icon name="arrowDownLeft" /></StatusButton>
      <StatusButton $w={26} aria-label="Next view"><Icon name="arrowUpRight" size={15} /></StatusButton>
    </StatusSection>
    <StatusSection $clear $w={16} />
  </StatusBar>
);

const App = () => {
  const [tab, setTab] = useState("Design");
  const [treeTab, setTreeTab] = useState("Structure");
  const [propTab, setPropTab] = useState("Properties");

  const message =
    "Click an object. Double-click to select an edge loop. Triple-click to select a solid.";

  return (
    <Window>
      <GlobalStyle />
      <TopBar active={tab} onSelect={setTab} />
      <RibbonBar />
      <Work>
        <Sidebar>
          <Panel $grow={178}>
            <PanelTitle text="Structure" />
            <Tree>
              <TreeItem level={0} icon="document" text="SC_Tuto_3DPrinting*" open />
              <TreeItem level={1} icon="part" text="Arc" />
              <TreeItem level={1} icon="part" text="Top" bold />
            </Tree>
          </Panel>
          <PanelTabs $h={29}>
            {["Structure", "Layers", "Selection", "Groups", "Views"].map((name) => (
              <PanelTab key={name} $on={name === treeTab} onClick={() => setTreeTab(name)}>
                {name}
              </PanelTab>
            ))}
          </PanelTabs>
          <Panel $grow={203} $plain>
            <PanelTitle text="Options - Selection" plain />
          </Panel>
          <Panel $grow={117}>
            <PanelTitle text="Properties" />
          </Panel>
          <PanelTabs $h={26}>
            {["Properties", "Appearance"].map((name) => (
              <PanelTab key={name} $on={name === propTab} onClick={() => setPropTab(name)}>
                {name}
              </PanelTab>
            ))}
          </PanelTabs>
        </Sidebar>
        <Main>
          <Frame>
            <Viewport>
              <ModelScene />
              <Hint>{message}</Hint>
            </Viewport>
            <ScrollBar $vertical>
              <ScrollButton $vertical aria-label="Scroll up"><Chevron dir="up" /></ScrollButton>
              <Track $grow={48} />
              <Track $grow={324} $thumb />
              <Track $grow={91} />
              <ScrollButton $vertical aria-label="Scroll down"><Chevron dir="down" /></ScrollButton>
              <SplitBox $vertical />
            </ScrollBar>
            <ScrollBar>
              <SplitBox />
              <ScrollButton aria-label="Scroll left"><Chevron dir="left" /></ScrollButton>
              <Track $grow={162} />
              <Track $grow={892} $thumb />
              <ScrollButton aria-label="Scroll right"><Chevron dir="right" /></ScrollButton>
            </ScrollBar>
            <Corner><span /></Corner>
          </Frame>
          <DocStrip>
            <DocTab>
              <Icon name="part" />
              SC_Tuto_3DPrinting*
              <button aria-label="Close document">
                <svg width="9" height="9"><path d="M2 2l5 5M7 2L2 7" stroke="#333" strokeWidth="1.400" /></svg>
              </button>
            </DocTab>
            <svg width="22" height="23" aria-hidden="true">
              <path d="M0 0h20L6 20q-2 2.500-6 2.500z" fill="#f3f6f7" />
              <path d="M22 .5q-3 0-5 3L6 20q-2 2.500-6 2.500" fill="none" stroke="#9aa0a8" />
            </svg>
            <DocRest>
              <button aria-label="Previous document">
                <svg width="7" height="10"><path d="M5.500 1v8L1 5z" fill="none" stroke="#6f747c" /></svg>
              </button>
              <button aria-label="Next document">
                <svg width="7" height="10"><path d="M1.500 1v8L6 5z" fill="none" stroke="#6f747c" /></svg>
              </button>
              <button aria-label="Close all">
                <svg width="9" height="9"><path d="M1 1l7 7M8 1L1 8" stroke="#6f747c" strokeWidth="1.500" /></svg>
              </button>
            </DocRest>
          </DocStrip>
        </Main>
      </Work>
      <Status text={message} />
    </Window>
  );
};

export default App;
